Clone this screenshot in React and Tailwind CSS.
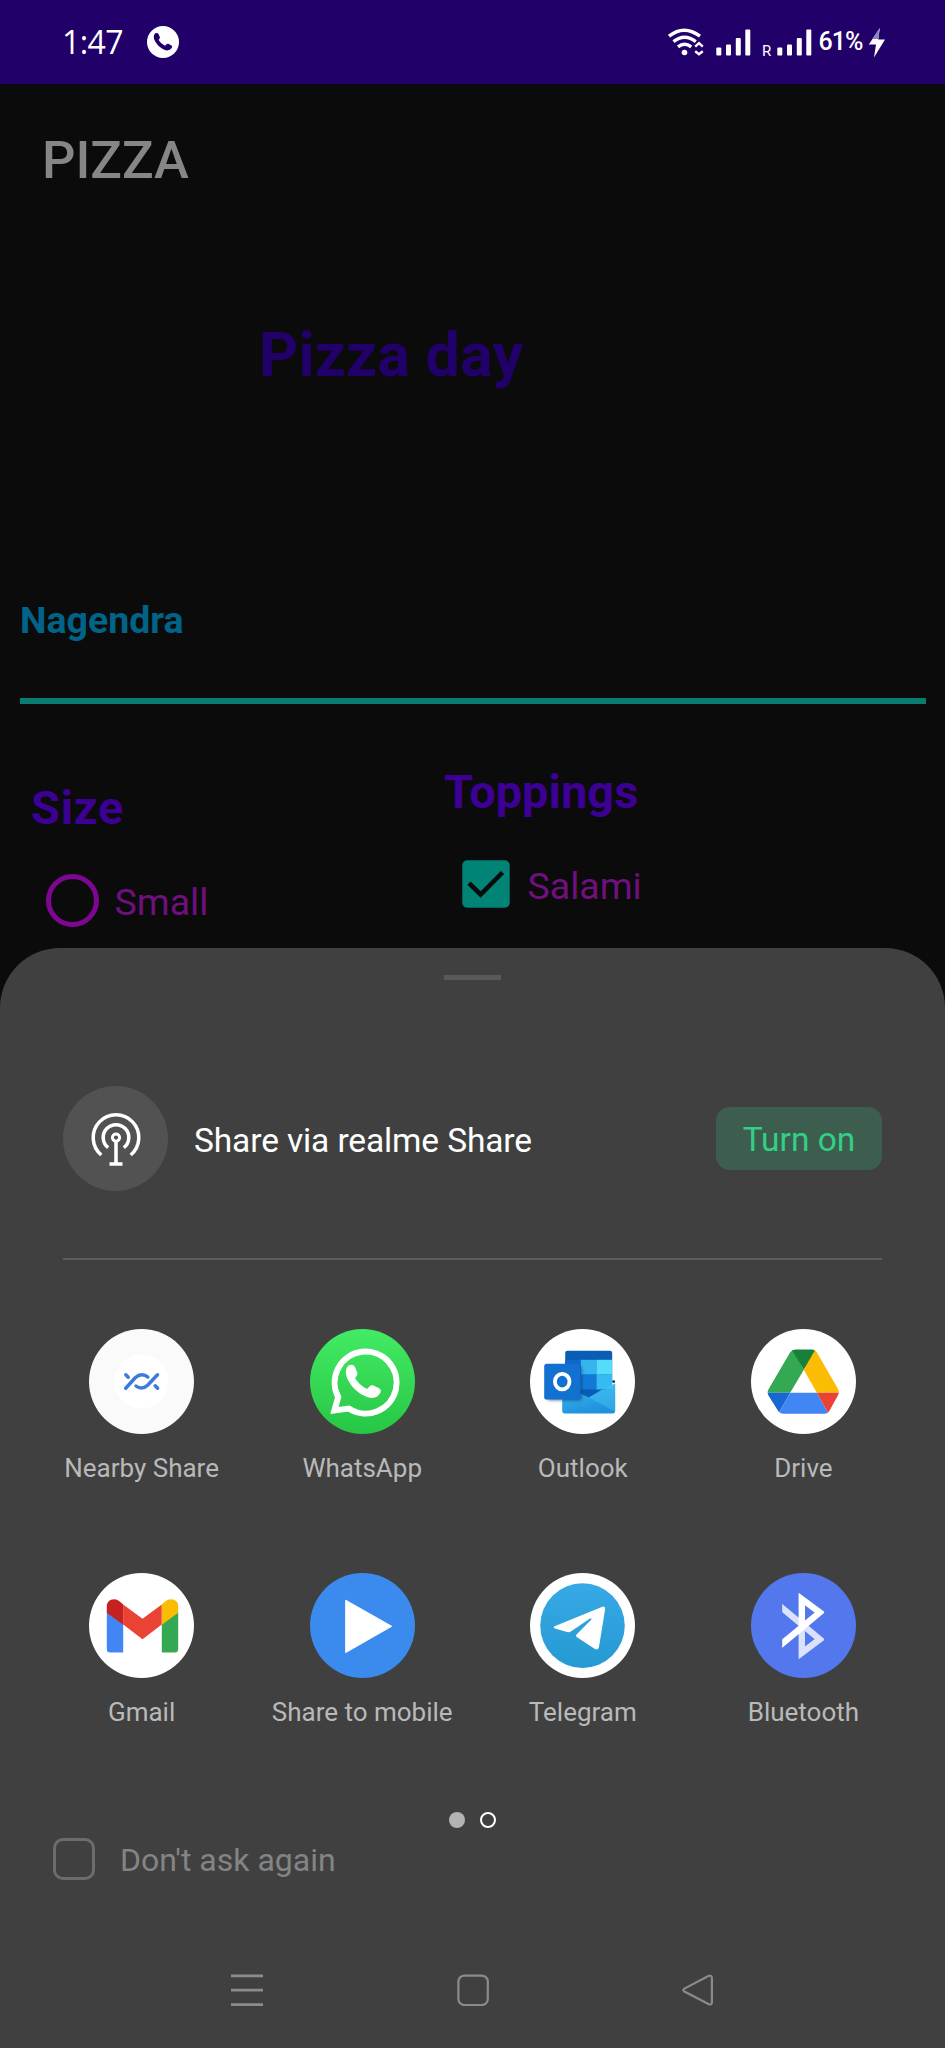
import React from "react";

const HANDSET =
  "M38.5 36.5 Q43 34.5 45 38 L47.3 43.5 Q48 46 45 49 Q49 56 57 60 L60 57 Q61.5 55.8 63.5 56.5 L69.5 59.5 Q71.8 61 70 64.5 Q67 69 61 69 Q53 68 44.5 60 Q36 51 35.8 43.5 Q36 38.5 38.5 36.5Z";

function SignalBars() {
  return (
    <svg className="block h-[27px] w-[35px]" viewBox="0 0 35 27" fill="#fff">
      <rect x="0.3" y="18.5" width="5" height="8" rx="1" />
      <rect x="10" y="15.5" width="5" height="11" rx="1" />
      <rect x="19.8" y="9" width="5" height="17.5" rx="1" />
      <rect x="29.3" y="0.5" width="5" height="26" rx="1" />
    </svg>
  );
}

function StatusBar() {
  return (
    <header className="flex h-[84px] shrink-0 items-start bg-[#220069] pl-[62px] text-white">
      <div className="mt-[26px] w-[85px] font-['Open_Sans'] text-[32px] leading-[32px] tracking-[-0.6px]">1:47</div>
      <svg className="mt-[26px] block h-8 w-8" viewBox="0 0 32 32">
        <circle cx="16" cy="16" r="16" fill="#fff" />
        <path d={HANDSET} fill="#220069" transform="translate(-12 -11.8) scale(.525)" />
      </svg>
      <svg className="mt-7 ml-[488px] block h-[29px] w-[37px]" viewBox="0 0 37 29" fill="none" stroke="#fff" strokeWidth="3.4" strokeLinecap="butt">
        <path d="M2 8.2 Q17 -3.8 33 8.2" />
        <path d="M6.5 13.6 Q17.5 5 28.8 13.6" />
        <path d="M11 18.8 Q17.5 13.8 24.3 18.8" />
        <circle cx="17.5" cy="24.5" r="2.8" fill="#fff" stroke="none" />
        <path d="M28.2 18.7 L32 15.2 L35.8 18.7 M28.2 23.3 L32 26.2 L35.8 23.3" strokeWidth="2.4" />
      </svg>
      <div className="mt-[28.5px] ml-[12px]"><SignalBars /></div>
      <div className="mt-[43px] ml-[11px] w-[14.5px] text-[15px] leading-[16px]">R</div>
      <div className="mt-[28.5px]"><SignalBars /></div>
      <div className="mt-[28px] ml-[7px] w-[49.5px] text-[25px] leading-[28px] font-medium tracking-[-1px]">61%</div>
      <svg className="mt-[27px] block h-8 w-[18px]" viewBox="0 0 18 32">
        <path d="M11.8 1 L0.8 17.5 H8 L6 30.5 L17 12.5 H10.2 Z" fill="#fff" />
        <path d="M11.8 1 L4.5 12 H10.3Z" fill="#8d7fc0" />
      </svg>
    </header>
  );
}

function OrderForm() {
  return (
    <main className="flex h-[864px] shrink-0 flex-col">
      <h1 className="mt-[50px] pl-[42px] text-[52.5px] leading-[52px] font-medium text-[#868686]">PIZZA</h1>
      <h2 className="mt-[138px] pl-[259px] text-[61px] leading-[62px] font-bold tracking-[0.2px] text-[#220069]">Pizza day</h2>
      <div className="ml-5 mr-[19.5px] mt-[215px] h-[103px] border-b-[6px] border-[#0a7d70] text-[37.5px] leading-[38px] font-bold text-[#006488]">
        Nagendra
      </div>
      <div className="grid grid-cols-[442px_1fr]">
        <section className="pl-[31px]">
          <h3 className="mt-[80px] text-[47px] leading-[48px] font-bold tracking-[0.7px] text-[#3c0094]">Size</h3>
          <div className="mt-[42px] ml-[15px] flex h-[53px] items-center">
            <span className="h-[53px] w-[53px] rounded-full border-[5px] border-[#7e0792]" />
            <span className="pt-[2px] pl-[15.5px] text-[37.5px] leading-[40px] text-[#6f107e]">Small</span>
          </div>
        </section>
        <section className="pl-[2px]">
          <h3 className="mt-[64px] text-[47px] leading-[48px] font-bold text-[#3c0094]">Toppings</h3>
          <div className="mt-[44px] ml-[18px] flex h-[48px] items-center">
            <svg className="block h-[48px] w-[48px]" viewBox="0 0 48 48">
              <rect x="0.3" y="0.3" width="47.4" height="47.4" rx="5" fill="#018376" />
              <path d="M7 23.2 L18.6 34.5 L40.5 12.5" fill="none" stroke="#0b0b0b" strokeWidth="4.6" />
            </svg>
            <span className="pt-[4px] pl-[17.5px] text-[37.5px] leading-[40px] text-[#6f107e]">Salami</span>
          </div>
        </section>
      </div>
    </main>
  );
}

function AppSvg({ children }) {
  return <svg className="block h-[105px] w-[105px]" viewBox="0 0 105 105">{children}</svg>;
}

function NearbyIcon() {
  return (
    <AppSvg>
      <circle cx="52.5" cy="52.5" r="52.5" fill="#fafafa" />
      <circle cx="52.5" cy="52.5" r="27" fill="#fff" />
      <g fill="none" stroke="#3d7bdb" strokeWidth="3.5" strokeLinecap="round">
        <path d="M36.7 59.2 L46.2 48.8 Q49.5 45.8 52.8 45.8 Q56.3 45.8 58.8 48" />
        <path d="M47 57 Q49.5 59 52.5 59 Q55.5 59 58.6 56.2 L68.5 45.8" />
        <path d="M36.8 45.8 L39.2 48.2 M66.2 56.8 L68.6 59.2" />
      </g>
    </AppSvg>
  );
}

function WhatsAppIcon() {
  return (
    <AppSvg>
      <defs>
        <linearGradient id="wa" x1="0" y1="0" x2="0" y2="1">
          <stop offset="0" stopColor="#43eb63" />
          <stop offset="1" stopColor="#27c646" />
        </linearGradient>
      </defs>
      <circle cx="52.5" cy="52.5" r="52.5" fill="url(#wa)" />
      <path d="M24.4 81.4 L28.2 68 A31 31 0 1 1 38.8 79.6 Z" fill="none" stroke="#fff" strokeWidth="6" />
      <path d={HANDSET} fill="#fff" />
    </AppSvg>
  );
}

function OutlookIcon() {
  return (
    <AppSvg>
      <defs>
        <linearGradient id="ol" x1="0" y1="0" x2="0.4" y2="1">
          <stop offset="0" stopColor="#3bbcf0" />
          <stop offset="1" stopColor="#1f92dd" />
        </linearGradient>
        <clipPath id="olbook"><rect x="35.2" y="21.8" width="47" height="50" rx="2.2" /></clipPath>
        <filter id="olsh" x="-30%" y="-30%" width="160%" height="160%"><feGaussianBlur stdDeviation="1.6" /></filter>
      </defs>
      <circle cx="52.5" cy="52.5" r="52.5" fill="#fff" />
      <g clipPath="url(#olbook)">
        <rect x="35" y="21" width="48" height="51" fill="#0a5db5" />
        <rect x="35" y="30.8" width="16" height="30" fill="#0f69c6" />
        <rect x="50.8" y="30.8" width="15.8" height="14.8" fill="#35b4ee" />
        <rect x="66.5" y="30.8" width="16" height="14.8" fill="#55dcfb" />
        <rect x="50.8" y="45.5" width="15.8" height="15" fill="#117ad6" />
        <rect x="66.5" y="45.5" width="16" height="15" fill="#37b9f1" />
      </g>
      <circle cx="83.7" cy="52.6" r="1.4" fill="#102a44" />
      <path d="M32.2 56 L58.8 68.5 L72 60.5 H82.2 V56 L85.2 54.5 V82.3 Q85.2 84.4 83 84.4 H34.4 Q32.2 84.4 32.2 82.3Z" fill="url(#ol)" />
      <path d="M58.8 68.5 L85 82.5 V54.5Z" fill="#4ccbf5" opacity=".4" />
      <rect x="17" y="37" width="35" height="34.5" rx="3" fill="#0a3d6e" opacity=".6" filter="url(#olsh)" />
      <rect x="14.2" y="34.8" width="36.3" height="35.7" rx="2.6" fill="#1170d0" />
      <ellipse cx="32.2" cy="52.6" rx="7.3" ry="7.8" fill="none" stroke="#fff" strokeWidth="3.8" />
    </AppSvg>
  );
}

function DriveIcon() {
  return (
    <AppSvg>
      <defs>
        <clipPath id="drv">
          <path d="M44.6 20.5 H61 Q64 20.5 65.6 23 L86.9 59.8 Q88.8 63 87 66.3 L78.6 81.6 Q76.8 84.8 73.5 84.8 H32.5 Q29 84.8 27 81.8 L17.6 66.8 Q15.8 63.8 17.4 60.6 L39.2 23.2 Q41 20.5 44.6 20.5Z" />
        </clipPath>
      </defs>
      <circle cx="52.5" cy="52.5" r="52.5" fill="#fff" />
      <g clipPath="url(#drv)">
        <path d="M41 19 L52.8 40.8 L39.2 63.8 H14 V55Z" fill="#34a853" />
        <path d="M39 20 H66 L52.8 40.8 L40.3 20Z" fill="#188038" />
        <path d="M64.6 20 L90 63.8 H65.8 L52.8 40.8Z" fill="#fbbc04" />
        <path d="M14 63.8 H39.2 L27.2 85 H14Z" fill="#1967d2" />
        <path d="M39.2 63.8 H65.8 L77.6 85 H27.2Z" fill="#4285f4" />
        <path d="M65.8 63.8 H90 V85 H77.6Z" fill="#ea4335" />
      </g>
    </AppSvg>
  );
}

function GmailIcon() {
  return (
    <AppSvg>
      <circle cx="52.5" cy="52.5" r="52.5" fill="#fff" />
      <path d="M17.8 39 L34.2 51 V79.5 H21.3 Q17.8 79.5 17.8 76Z" fill="#4285f4" />
      <path d="M89.2 39 L72.8 51 V79.5 H85.7 Q89.2 79.5 89.2 76Z" fill="#34a853" />
      <path d="M34.2 31.5 L53.5 45.8 L72.8 31.5 V51.5 L53.5 66.2 L34.2 51.5Z" fill="#ea4335" />
      <path d="M17.8 39.8 V33.8 Q17.8 26.2 25.2 26.2 Q28.2 26.2 30.8 28.6 L34.2 31.5 V51.8Z" fill="#c5221f" />
      <path d="M89.2 39.8 V33.8 Q89.2 26.2 81.8 26.2 Q78.8 26.2 76.2 28.6 L72.8 31.5 V51.8Z" fill="#fbbc04" />
    </AppSvg>
  );
}

function PlayIcon() {
  return (
    <AppSvg>
      <circle cx="52.5" cy="52.5" r="52.5" fill="#3b8bef" />
      <path d="M35.7 27.2 L81.7 53.3 L35.7 79.6Z" fill="#fff" stroke="#fff" strokeWidth="1" strokeLinejoin="round" />
    </AppSvg>
  );
}

function TelegramIcon() {
  return (
    <AppSvg>
      <defs>
        <linearGradient id="tg" x1="0" y1="0" x2="0" y2="1">
          <stop offset="0" stopColor="#37aae6" />
          <stop offset="1" stopColor="#2599d2" />
        </linearGradient>
      </defs>
      <circle cx="52.5" cy="52.5" r="52.5" fill="#fff" />
      <circle cx="52.5" cy="52.6" r="42.3" fill="url(#tg)" />
      <path
        d="M24.6 53.2 L72.4 33.8 Q75.4 32.9 75.1 36.2 L69 74 Q68.3 77.6 65 76 L46.6 63.9 Q45.4 62.9 46.5 61.6 L61.2 46.8 Q62.4 45 60 45.6 L41.2 58.2 Q39.2 59.5 37 59 L25 55.4 Q22.6 54.4 24.6 53.2Z"
        fill="#fff"
      />
    </AppSvg>
  );
}

function BluetoothIcon() {
  return (
    <AppSvg>
      <defs><clipPath id="bt"><rect x="31.2" y="15" width="42" height="75" /></clipPath></defs>
      <circle cx="52.5" cy="52.5" r="52.5" fill="#5377ed" />
      <g clipPath="url(#bt)" fill="none" strokeWidth="6.4">
        <path d="M26 30.8 L68.8 66.4 L50.8 79.8 V52" stroke="#dbe3fc" />
        <path d="M26 74.9 L68.8 39.4 L50.8 26 V56" stroke="#fff" />
      </g>
    </AppSvg>
  );
}

const APPS = [
  ["Nearby Share", NearbyIcon],
  ["WhatsApp", WhatsAppIcon],
  ["Outlook", OutlookIcon],
  ["Drive", DriveIcon],
  ["Gmail", GmailIcon],
  ["Share to mobile", PlayIcon],
  ["Telegram", TelegramIcon],
  ["Bluetooth", BluetoothIcon],
];

function ShareSheet() {
  return (
    <section className="flex flex-1 flex-col rounded-t-[60px] bg-[#404040]">
      <div className="mt-[27px] h-[5px] w-[57px] shrink-0 self-center bg-[#595959]" />
      <div className="mx-[63px] mt-[106px] flex h-[105px] shrink-0 items-center">
        <div className="flex h-[105px] w-[105px] items-center justify-center rounded-full bg-[#525252]">
          <svg className="block h-[56px] w-[52px]" viewBox="0 0 52 56" fill="none" stroke="#fff" strokeWidth="3.5">
            <path d="M11.3 44 A22.8 22.8 0 1 1 40.7 44" />
            <path d="M18.2 36.6 A12.8 12.8 0 1 1 33.8 36.6" />
            <circle cx="26" cy="26.6" r="3.6" strokeWidth="3" />
            <path d="M26 30 V53" strokeWidth="3.6" />
            <path d="M19.5 53 H32.5" />
          </svg>
        </div>
        <span className="grow pt-[4px] pl-[26px] text-[33.5px] leading-[40px] tracking-[-0.12px] text-white">Share via realme Share</span>
        <button className="h-[63px] w-[166px] rounded-[14px] bg-[#3d5e4f] pt-[3px] text-[33.5px] leading-[40px] text-[#32cf86]">
          Turn on
        </button>
      </div>
      <div className="mx-[63px] mt-[67px] h-[2px] shrink-0 bg-[#5c5c5c]" />
      <div className="mx-[31.3px] mt-[68.5px] grid h-[483.5px] shrink-0 grid-cols-4 grid-rows-[244px_239px]">
        {APPS.map(([name, Icon]) => (
          <div key={name} className="flex flex-col items-center">
            <Icon />
            <span className="mt-[19.5px] text-[26px] leading-[30px] whitespace-nowrap text-[#b9b9b9]">{name}</span>
          </div>
        ))}
      </div>
      <div className="flex h-4 shrink-0 justify-center gap-[15px]">
        <span className="h-4 w-4 rounded-full bg-[#b3b3b3]" />
        <span className="h-4 w-4 rounded-full border-2 border-white" />
      </div>
      <div className="mt-[10px] flex h-[42px] shrink-0 items-center pl-[52.5px]">
        <span className="h-[42px] w-[42px] rounded-[10px] border-[3px] border-[#6c6c6c]" />
        <span className="pt-[2px] pl-[25.5px] text-[32px] leading-[40px] text-[#848484]">Don't ask again</span>
      </div>
      <nav className="mt-[94px] flex h-8 shrink-0 items-center justify-between px-[231px]">
        <svg className="block h-8 w-8" viewBox="0 0 32 32" stroke="#8b8b8b" strokeWidth="2.7">
          <path d="M0 1.8 H32 M0 16.2 H32 M0 30.6 H32" />
        </svg>
        <svg className="block h-8 w-8" viewBox="0 0 32 32" fill="none" stroke="#8b8b8b" strokeWidth="2.2">
          <rect x="1.4" y="1.6" width="29.4" height="29.4" rx="6" />
        </svg>
        <svg className="block h-8 w-8" viewBox="0 0 32 32" fill="none" stroke="#8b8b8b" strokeWidth="2.2">
          <path d="M2.4 14.6 L26.4 2 Q29.9 0.6 29.9 4.2 V28.2 Q29.9 31.6 26.4 30 L2.4 17.5 Q0.2 16 2.4 14.6Z" />
        </svg>
      </nav>
    </section>
  );
}

export default function App() {
  return (
    <div className="flex h-[2048px] w-[945px] flex-col overflow-hidden bg-[#0b0b0b] font-['Roboto',sans-serif]">
      <StatusBar />
      <OrderForm />
      <ShareSheet />
    </div>
  );
}
